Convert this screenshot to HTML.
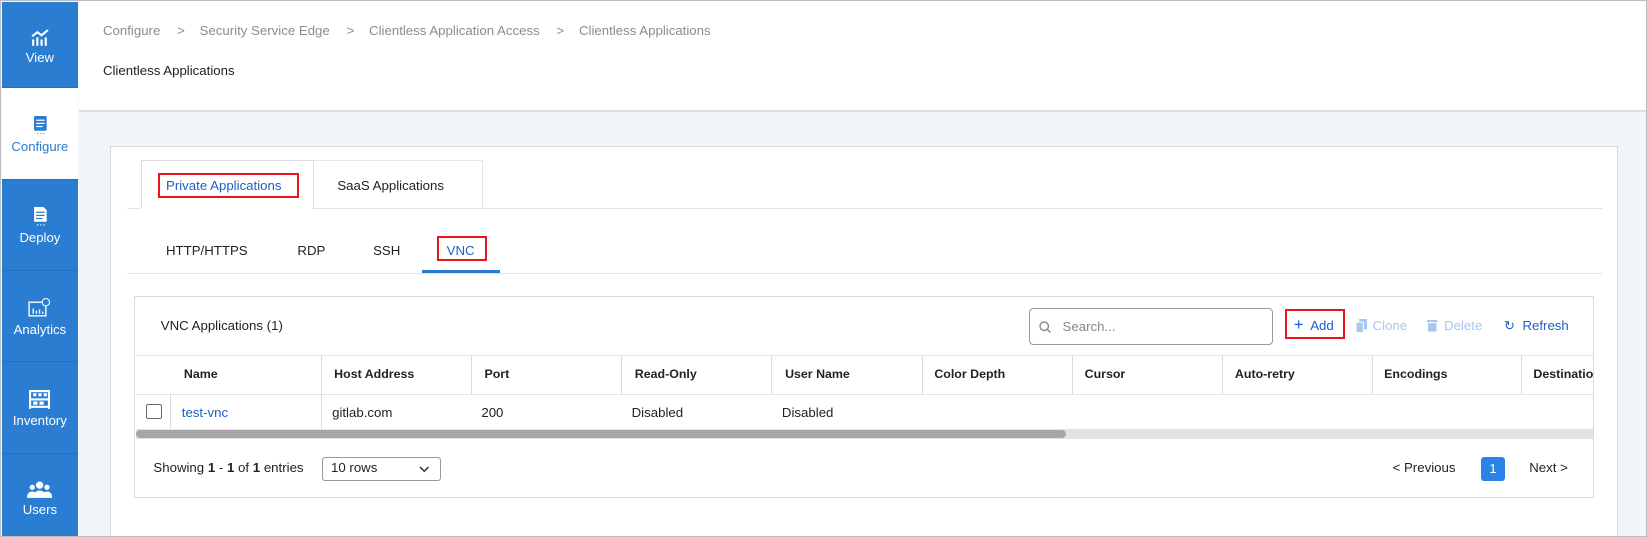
<!DOCTYPE html>
<html><head><meta charset="utf-8"><style>
html,body{margin:0;padding:0;background:#fff;overflow:hidden}
#w{zoom:1.05105;width:1567px;height:511px;position:relative;font-family:"Liberation Sans",sans-serif;font-size:12.6px;color:#222;box-sizing:border-box;border:1px solid #bdbdbd;background:#f2f5fa;overflow:hidden}
.a{position:absolute}
.side{left:1px;top:1px;width:72px;height:510px;background:#2a7dd1}
.si{position:absolute;left:0;width:72px;color:#fff;text-align:center;font-size:12.5px;border-bottom:1px solid #2270bf}
.si svg{display:block;margin:0 auto 4px}
.hdr{left:74px;top:0;width:1491px;height:104px;background:#fff;border-bottom:2px solid #dde1e6}
.bc{color:#8c8c8c}
.card{left:104px;top:138px;width:1433px;height:380px;background:#fff;border:1px solid #d9d9d9}
.ln{background:#e3e3e3;height:1px}
.tb{left:127px;top:281px;width:1387px;height:190px;border:1px solid #d9d9d9;background:#fff}
.th{font-weight:bold;font-size:11.8px;top:348px}
.cl{top:337px;width:1px;height:70px;background:#dcdcdc}
.td{top:384px}
</style></head><body><div id="w">
<div class="a side">
 <div class="si" style="top:0;height:81px"><svg style="margin-top:26px" width="18" height="16" viewBox="0 0 18 16"><path d="M2 7l5-4 4 3 6-5" stroke="#fff" stroke-width="2" fill="none"/><rect x="2" y="10" width="2" height="6" fill="#fff"/><rect x="6" y="8" width="2" height="8" fill="#fff"/><rect x="10" y="10" width="2" height="6" fill="#fff"/><rect x="14" y="8" width="2" height="8" fill="#fff"/></svg>View</div>
 <div class="si" style="top:82px;height:86px;background:#fff;color:#2a7dd1"><svg style="margin-top:26px" width="14" height="18" viewBox="0 0 14 18"><rect x="1" y="0" width="12" height="14" rx="1" fill="#2a7dd1"/><path d="M3 4h8M3 7h8M3 10h6" stroke="#fff" stroke-width="1.2"/><path d="M4 17h1M7 17h1M10 17h1" stroke="#2a7dd1" stroke-width="1.5"/></svg>Configure</div>
 <div class="si" style="top:169px;height:86px"><svg style="margin-top:26px" width="14" height="18" viewBox="0 0 14 18"><path d="M1 0h9l3 3v11H1z" fill="#fff"/><path d="M3 5h8M3 8h8M3 11h6" stroke="#2a7dd1" stroke-width="1.2"/><path d="M4 17h1M7 17h1M10 17h1" stroke="#fff" stroke-width="1.5"/></svg>Deploy</div>
 <div class="si" style="top:256px;height:86px"><svg style="margin-top:26px" width="22" height="18" viewBox="0 0 22 18"><rect x="1" y="4" width="16" height="13" fill="none" stroke="#fff" stroke-width="1.3"/><path d="M5 15v-5M8 15v-3M11 15v-4M14 15v-2" stroke="#fff" stroke-width="1.3"/><circle cx="17" cy="4" r="3.5" fill="#2a7dd1" stroke="#fff" stroke-width="1"/></svg>Analytics</div>
 <div class="si" style="top:343px;height:86px"><svg style="margin-top:26px" width="20" height="18" viewBox="0 0 20 18"><path d="M1 0v18M19 0v18M1 9h18M1 16h18M1 1h18" stroke="#fff" stroke-width="2"/><rect x="4" y="3" width="3" height="3" fill="#fff"/><rect x="9" y="3" width="3" height="3" fill="#fff"/><rect x="14" y="3" width="3" height="3" fill="#fff"/><rect x="4" y="11" width="4" height="3" fill="#fff"/><rect x="10" y="11" width="4" height="3" fill="#fff"/></svg>Inventory</div>
 <div class="si" style="top:430px;height:81px;border:0"><svg style="margin-top:26px" width="24" height="16" viewBox="0 0 24 16"><circle cx="12" cy="4" r="3.5" fill="#fff"/><circle cx="5" cy="6" r="2.5" fill="#fff"/><circle cx="19" cy="6" r="2.5" fill="#fff"/><path d="M6 16c0-5 3-7 6-7s6 2 6 7z" fill="#fff"/><path d="M0 16c0-4 2-6 5-6s4 2 4 6zM15 16c0-4 1-6 4-6s5 2 5 6z" fill="#fff"/></svg>Users</div>
</div>
<div class="a hdr">
 <div class="a bc" style="left:23px;top:21px;white-space:nowrap">Configure<span style="margin:0 14px 0 16px">&gt;</span>Security Service Edge<span style="margin:0 14px 0 16px">&gt;</span>Clientless Application Access<span style="margin:0 14px 0 16px">&gt;</span>Clientless Applications</div>
 <div class="a" style="left:23px;top:59px">Clientless Applications</div>
</div>
<div class="a card"></div>
<div class="a" style="left:133px;top:151px;width:163px;height:47px;border:1px solid #ddd;border-bottom:0;background:#fff"></div>
<div class="a" style="left:296px;top:151px;width:162px;height:47px;border:1px solid #e6e6e6;border-bottom:0;border-left:0"></div>
<div class="a ln" style="left:120px;top:197px;width:1403px"></div>
<div class="a" style="left:133px;top:197px;width:163px;height:2px;background:#fff"></div>
<div class="a" style="left:149px;top:164px;width:135px;height:23px;border:2px solid #e8141b;box-sizing:border-box"></div>
<div class="a" style="left:157px;top:168px;color:#1d5fc7">Private Applications</div>
<div class="a" style="left:320px;top:168px">SaaS Applications</div>
<div class="a" style="left:157px;top:230px">HTTP/HTTPS</div>
<div class="a" style="left:282px;top:230px">RDP</div>
<div class="a" style="left:354px;top:230px">SSH</div>
<div class="a" style="left:415px;top:224px;width:47px;height:23px;border:2px solid #e8141b;box-sizing:border-box"></div>
<div class="a" style="left:424px;top:230px;color:#1d5fc7">VNC</div>
<div class="a ln" style="left:120px;top:259px;width:1403px"></div>
<div class="a" style="left:401px;top:256px;width:74px;height:3px;background:#2a7dd1"></div>
<div class="a tb"></div>
<div class="a" style="left:152px;top:302px">VNC Applications (1)</div>
<div class="a" style="left:978px;top:292px;width:232px;height:35px;border:1px solid #999;border-radius:4px;box-sizing:border-box;background:#fff"></div>
<svg class="a" style="left:988px;top:304px" width="12" height="12" viewBox="0 0 12 12"><circle cx="5" cy="5" r="4" fill="none" stroke="#888" stroke-width="1.3"/><path d="M8 8l3 3" stroke="#888" stroke-width="1.3"/></svg>
<div class="a" style="left:1010px;top:303px;color:#888">Search...</div>
<div class="a" style="left:1222px;top:293px;width:57px;height:29px;border:2px solid #e8141b;box-sizing:border-box"></div>
<div class="a" style="left:1230px;top:302px;color:#1d5fc7"><b style="font-weight:normal;font-size:16px;line-height:13px">+</b>&nbsp; Add</div>
<svg class="a" style="left:1289px;top:303px" width="11" height="13" viewBox="0 0 11 13"><rect x="3" y="0" width="8" height="10" fill="#a9c6ee"/><rect x="0" y="3" width="7" height="10" fill="#a9c6ee" stroke="#fff"/></svg>
<div class="a" style="left:1305px;top:302px;color:#a9c6ee">Clone</div>
<svg class="a" style="left:1357px;top:303px" width="10" height="12" viewBox="0 0 10 12"><rect x="0" y="1" width="10" height="2" fill="#a9c6ee"/><rect x="1" y="4" width="8" height="8" fill="#a9c6ee"/></svg>
<div class="a" style="left:1373px;top:302px;color:#a9c6ee">Delete</div>
<div class="a" style="left:1430px;top:302px;color:#1d5fc7">↻&nbsp; Refresh</div>
<div class="a ln" style="left:128px;top:337px;width:1387px"></div>
<div class="a ln" style="left:128px;top:374px;width:1387px"></div>
<div class="a cl" style="left:161px;top:374px;height:33px"></div>
<div class="a cl" style="left:304px"></div><div class="a cl" style="left:447px;height:37px"></div><div class="a cl" style="left:590px;height:37px"></div><div class="a cl" style="left:733px;height:37px"></div><div class="a cl" style="left:876px;height:37px"></div><div class="a cl" style="left:1019px;height:37px"></div><div class="a cl" style="left:1162px;height:37px"></div><div class="a cl" style="left:1304px;height:37px"></div><div class="a cl" style="left:1446px;height:37px"></div>
<div class="a th" style="left:174px">Name</div><div class="a th" style="left:317px">Host Address</div><div class="a th" style="left:460px">Port</div><div class="a th" style="left:603px">Read-Only</div><div class="a th" style="left:746px">User Name</div><div class="a th" style="left:888px">Color Depth</div><div class="a th" style="left:1031px">Cursor</div><div class="a th" style="left:1174px">Auto-retry</div><div class="a th" style="left:1316px">Encodings</div><div class="a th" style="left:1458px;width:57px;overflow:hidden;white-space:nowrap">Destination</div>
<div class="a" style="left:138px;top:383px;width:15px;height:15px;border:1px solid #666;border-radius:2px;box-sizing:border-box"></div>
<div class="a td" style="left:172px;color:#1d5fc7">test-vnc</div><div class="a td" style="left:315px">gitlab.com</div><div class="a td" style="left:457px">200</div><div class="a td" style="left:600px">Disabled</div><div class="a td" style="left:743px">Disabled</div>
<div class="a" style="left:128px;top:407px;width:1387px;height:10px;background:#e2e2e2"></div>
<div class="a" style="left:128px;top:408px;width:885px;height:8px;background:#a6a6a6;border-radius:4px"></div>
<div class="a" style="left:145px;top:437px">Showing <b>1</b> - <b>1</b> of <b>1</b> entries</div>
<div class="a" style="left:305px;top:434px;width:114px;height:23px;border:1px solid #999;border-radius:3px;box-sizing:border-box;background:#fff"></div>
<div class="a" style="left:314px;top:437px">10 rows</div>
<svg class="a" style="left:398px;top:442px" width="10" height="7" viewBox="0 0 10 7"><path d="M1 1l4 4 4-4" stroke="#333" stroke-width="1.4" fill="none"/></svg>
<div class="a" style="left:1324px;top:437px">&lt; Previous</div>
<div class="a" style="left:1408px;top:434px;width:23px;height:23px;background:#2a84e8;border-radius:3px;color:#fff;text-align:center;line-height:23px">1</div>
<div class="a" style="left:1454px;top:437px">Next &gt;</div>
</div></body></html>
